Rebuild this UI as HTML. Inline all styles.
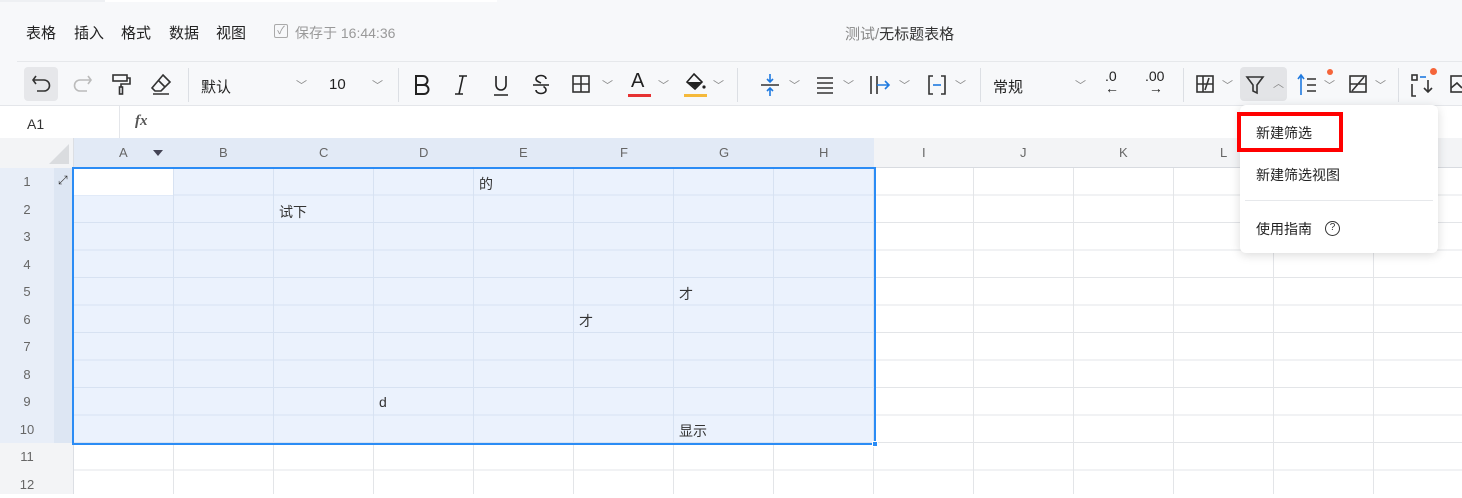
<!DOCTYPE html><html><head><meta charset="utf-8"><style>
*{margin:0;padding:0;box-sizing:border-box}
body{width:1462px;height:494px;overflow:hidden;background:#fff;font-family:"Liberation Sans","Noto Sans CJK SC",sans-serif;color:#333;position:relative}
.a{position:absolute}
.top{left:0;top:0;width:1462px;height:106px;background:#f7f8fa;border-bottom:1px solid #e4e6ea}
.menu{top:22px;font-size:15px;color:#222}
.tb{top:70px;font-size:15px;color:#222}
.sep{top:68px;width:1px;height:34px;background:#dcdfe4}
.chev{font-size:11px;color:#888}
.colh{top:138px;height:30px;background:#f3f4f6;border-bottom:1px solid #d8dbe0;font-size:13px;color:#666;text-align:center;line-height:30px}
.rowh{left:0;width:74px;height:27.5px;font-size:13px;color:#666;text-align:center;padding-right:20px;line-height:27px}
.cell{font-size:14px;color:#333}
</style></head><body>
<div class="a top"></div>
<div class="a" style="left:0;top:0;width:105px;height:2px;background:#eef0f3"></div>
<div class="a" style="left:105px;top:0;width:392px;height:2px;background:#fff"></div>
<div class="a" style="left:17px;top:61px;width:1445px;height:1px;background:#e6e8eb"></div>
<div class="a menu" style="left:26px">表格</div>
<div class="a menu" style="left:74px">插入</div>
<div class="a menu" style="left:121px">格式</div>
<div class="a menu" style="left:169px">数据</div>
<div class="a menu" style="left:216px">视图</div>
<div class="a" style="left:274px;top:24px;width:14px;height:14px;border:1px solid #aaa;border-radius:2px;font-size:11px;color:#999;line-height:12px;text-align:center">✓</div>
<div class="a" style="left:295px;top:23px;font-size:14px;color:#999">保存于 16:44:36</div>
<div class="a" style="left:845px;top:23px;font-size:15px;color:#333"><span style="color:#888">测试/</span>无标题表格</div>
<div class="a" style="left:24px;top:67px;width:34px;height:34px;background:#e6e7ea;border-radius:4px"></div>
<svg class="a" style="left:30px;top:72px" width="24" height="24" viewBox="0 0 24 24" fill="none" stroke="#333" stroke-width="1.6"><path d="M6 4 L3 8 L6 12 M3 8 H14 a5 5 0 0 1 0 11 H7"/></svg>
<svg class="a" style="left:70px;top:72px" width="24" height="24" viewBox="0 0 24 24" fill="none" stroke="#bbb" stroke-width="1.6"><path d="M18 4 L21 8 L18 12 M21 8 H10 a5 5 0 0 0 0 11 H17"/></svg>
<svg class="a" style="left:110px;top:72px" width="24" height="24" viewBox="0 0 24 24" fill="none" stroke="#333" stroke-width="1.6"><rect x="3" y="3" width="14" height="6"/><path d="M17 6 H20 V12 H11 V15"/><rect x="9.5" y="15" width="3" height="7"/></svg>
<svg class="a" style="left:149px;top:72px" width="24" height="24" viewBox="0 0 24 24" fill="none" stroke="#333" stroke-width="1.6"><path d="M14 3 L21 10 L12 19 L6 19 L3 16 Z M9 8 L16 15 M4 22 H20"/></svg>
<div class="a sep" style="left:188px"></div>
<div class="a tb" style="left:201px;top:76px">默认</div><div class="a chev" style="left:296px;top:77px">﹀</div>
<div class="a tb" style="left:329px;top:76px">10</div><div class="a chev" style="left:372px;top:77px">﹀</div>
<div class="a sep" style="left:398px"></div>
<svg class="a" style="left:413px;top:74px" width="18" height="22" viewBox="0 0 18 22" fill="none" stroke="#222" stroke-width="2"><path d="M3 2H10a4.5 4.5 0 0 1 0 9H3ZM3 11H11a4.5 4.5 0 0 1 0 9H3Z"/></svg>
<svg class="a" style="left:452px;top:74px" width="18" height="22" viewBox="0 0 18 22" fill="none" stroke="#222" stroke-width="1.6"><path d="M7 2H15M3 20H11M11 2L7 20"/></svg>
<svg class="a" style="left:491px;top:74px" width="20" height="22" viewBox="0 0 20 22" fill="none" stroke="#222" stroke-width="1.6"><path d="M5 2V11a5 5 0 0 0 10 0V2M3 21H17"/></svg>
<svg class="a" style="left:531px;top:74px" width="20" height="22" viewBox="0 0 20 22" fill="none" stroke="#222" stroke-width="1.6"><path d="M15 5a5 3.5 0 0 0-10 0c0 2 2.5 3 5 4M5 16a5 3.5 0 0 0 10 0c0-1.5-1-2.5-2.5-3.5M2 11H18"/></svg>
<svg class="a" style="left:571px;top:74px" width="20" height="20" viewBox="0 0 20 20" fill="none" stroke="#333" stroke-width="1.6"><rect x="2" y="2" width="16" height="16"/><path d="M10 2V18M2 10H18"/></svg><div class="a chev" style="left:602px;top:77px">﹀</div>
<div class="a" style="left:631px;top:70px;font-size:20px;color:#222">A</div><div class="a" style="left:628px;top:94px;width:23px;height:3px;background:#e63232"></div><div class="a chev" style="left:658px;top:77px">﹀</div>
<svg class="a" style="left:683px;top:72px" width="24" height="22" viewBox="0 0 24 22" fill="#222"><path d="M11 2 L19 10 L12 17 L4 10 Z" fill="none" stroke="#222" stroke-width="1.6"/><path d="M5 10 H18 L12 16 Z"/><circle cx="21" cy="15" r="1.6"/></svg><div class="a" style="left:684px;top:94px;width:23px;height:3px;background:#f5b93b"></div><div class="a chev" style="left:713px;top:77px">﹀</div>
<div class="a sep" style="left:737px"></div>
<svg class="a" style="left:759px;top:73px" width="22" height="24" viewBox="0 0 22 24" fill="none" stroke="#1f7ae0" stroke-width="1.6"><path d="M11 1V9M8 6L11 9L14 6M11 23V15M8 18L11 15L14 18"/><path d="M2 12H20" stroke="#333"/></svg><div class="a chev" style="left:789px;top:77px">﹀</div>
<svg class="a" style="left:815px;top:75px" width="20" height="20" viewBox="0 0 20 20" stroke="#333" stroke-width="1.6"><path d="M2 3H18M2 8H18M2 13H18M2 18H18"/></svg><div class="a chev" style="left:843px;top:77px">﹀</div>
<svg class="a" style="left:869px;top:74px" width="24" height="22" viewBox="0 0 24 22" fill="none" stroke="#333" stroke-width="1.6"><path d="M2 2V20M8 2V20"/><path d="M8 11H20M16 7L20 11L16 15" stroke="#1f7ae0"/></svg><div class="a chev" style="left:899px;top:77px">﹀</div>
<svg class="a" style="left:927px;top:74px" width="20" height="22" viewBox="0 0 20 22" fill="none" stroke="#333" stroke-width="1.6"><path d="M6 2H2V20H6M14 2H18V20H14"/><path d="M6 11H14" stroke="#1f7ae0"/></svg><div class="a chev" style="left:955px;top:77px">﹀</div>
<div class="a sep" style="left:980px"></div>
<div class="a tb" style="left:993px;top:76px">常规</div><div class="a chev" style="left:1075px;top:77px">﹀</div>
<div class="a" style="left:1105px;top:70px;font-size:14px;color:#222;line-height:12px">.0<br>←</div>
<div class="a" style="left:1145px;top:70px;font-size:14px;color:#222;line-height:12px">.00<br>&nbsp;→</div>
<div class="a sep" style="left:1183px"></div>
<svg class="a" style="left:1195px;top:74px" width="20" height="20" viewBox="0 0 20 20" fill="none" stroke="#333" stroke-width="1.6"><rect x="2" y="2" width="16" height="16"/><path d="M8 2V18M2 10H18M14 4L10 16"/></svg><div class="a chev" style="left:1222px;top:77px">﹀</div>
<div class="a" style="left:1240px;top:67px;width:47px;height:34px;background:#e3e4e7;border-radius:4px"></div>
<svg class="a" style="left:1245px;top:74px" width="20" height="22" viewBox="0 0 20 22" fill="none" stroke="#333" stroke-width="1.6"><path d="M2 3H18L12 11V19L8 17V11Z"/></svg><div class="a chev" style="left:1273px;top:75px">︿</div>
<svg class="a" style="left:1296px;top:73px" width="24" height="24" viewBox="0 0 24 24" fill="none" stroke="#333" stroke-width="1.6"><path d="M5 22V3M2 6L5 2L8 6" stroke="#1f7ae0"/><path d="M11 6H20M11 12H20M11 18H20"/></svg><div class="a" style="left:1327px;top:69px;width:6px;height:6px;border-radius:3px;background:#f5653a"></div><div class="a chev" style="left:1324px;top:77px">﹀</div>
<svg class="a" style="left:1348px;top:74px" width="20" height="20" viewBox="0 0 20 20" fill="none" stroke="#333" stroke-width="1.6"><rect x="2" y="2" width="16" height="16"/><path d="M2 10H18M16 3L4 17"/></svg><div class="a chev" style="left:1375px;top:77px">﹀</div>
<div class="a sep" style="left:1398px"></div>
<svg class="a" style="left:1410px;top:72px" width="24" height="26" viewBox="0 0 24 26" fill="none" stroke="#333" stroke-width="1.6"><rect x="2" y="3" width="5" height="5"/><path d="M2 12V24H6M18 8V20M14 16L18 20L22 16" /><path d="M10 5H16" stroke="#1f7ae0"/></svg><div class="a" style="left:1430px;top:68px;width:7px;height:7px;border-radius:4px;background:#f5653a"></div>
<svg class="a" style="left:1450px;top:74px" width="20" height="20" viewBox="0 0 20 20" fill="none" stroke="#333" stroke-width="1.6"><rect x="1" y="2" width="16" height="16"/><path d="M1 14L7 9L12 14"/></svg>

<div class="a" style="left:0;top:106px;width:1462px;height:32px;background:#fff"></div>
<div class="a" style="left:119px;top:106px;width:1px;height:32px;background:#e4e6ea"></div>
<div class="a" style="left:27px;top:116px;font-size:14px;color:#333">A1</div>
<div class="a" style="left:135px;top:113px;font-size:15px;font-style:italic;font-weight:bold;color:#555;font-family:'Liberation Serif',serif">fx</div>

<div class="a" style="left:74px;top:168px;width:1388px;height:326px;background-image:repeating-linear-gradient(90deg,transparent 0 99px,#e3e5e8 99px 100px),repeating-linear-gradient(180deg,transparent 0 26.5px,#e3e5e8 26.5px 27.5px)"></div>
<div class="a" style="left:74px;top:168px;width:800px;height:275px;background:#ebf2fd;background-image:repeating-linear-gradient(90deg,transparent 0 99px,#d7e2f2 99px 100px),repeating-linear-gradient(180deg,transparent 0 26.5px,#d7e2f2 26.5px 27.5px)"></div>
<div class="a" style="left:74px;top:168px;width:99px;height:27px;background:#fff"></div>
<div class="a colh" style="left:0;width:1462px"></div>
<div class="a" style="left:74px;top:138px;width:800px;height:30px;background:#e2eaf6;border-bottom:1px solid #d2dcec"></div>
<div class="a" style="left:0;top:138px;width:74px;height:30px;background:#f3f4f6;border-right:1px solid #dcdfe4"></div>
<div class="a" style="left:49px;top:144px;width:0;height:0;border-left:20px solid transparent;border-bottom:20px solid #dadcdf"></div>
<div class="a" style="left:0;top:168px;width:74px;height:326px;background:#f3f4f6;border-right:1px solid #dcdfe4"></div>
<div class="a" style="left:0;top:168px;width:74px;height:275px;background:#e8eef8"></div>
<div class="a" style="left:54px;top:168px;width:19px;height:275px;background:#dde6f3"></div>
<div class="a" style="left:58px;top:173px;font-size:12px;color:#333">⤢</div>
<div class="a" style="left:153px;top:150px;width:0;height:0;border-left:5px solid transparent;border-right:5px solid transparent;border-top:6px solid #445"></div>
<div class="a" style="left:72px;top:167px;width:804px;height:278px;border:2px solid #2b8cf5"></div>
<div class="a" style="left:872px;top:441px;width:6px;height:6px;background:#2b8cf5;border:1px solid #fff"></div>

<div class="a cell" style="left:479px;top:174px">的</div>
<div class="a cell" style="left:279px;top:202px">试下</div>
<div class="a cell" style="left:679px;top:284px">才</div>
<div class="a cell" style="left:579px;top:311px">才</div>
<div class="a cell" style="left:379px;top:394px">d</div>
<div class="a cell" style="left:679px;top:421px">显示</div>

<div class="a" style="left:1240px;top:105px;width:198px;height:148px;background:#fff;border-radius:6px;box-shadow:0 2px 10px rgba(0,0,0,.15)"></div>
<div class="a" style="left:1237px;top:112px;width:106px;height:40px;border:4px solid #f00"></div>
<div class="a" style="left:1256px;top:123px;font-size:14px;color:#222">新建筛选</div>
<div class="a" style="left:1256px;top:165px;font-size:14px;color:#222">新建筛选视图</div>
<div class="a" style="left:1245px;top:200px;width:188px;height:1px;background:#e6e8eb"></div>
<div class="a" style="left:1256px;top:219px;font-size:14px;color:#222">使用指南</div>
<div class="a" style="left:1325px;top:221px;width:15px;height:15px;border:1.3px solid #333;border-radius:50%;font-size:10px;text-align:center;line-height:12px">?</div>

<div class="a" style="left:0;top:138px;width:1462px;height:30px;font-size:13px;color:#666;line-height:30px">
<span class="a" style="left:119px">A</span><span class="a" style="left:219px">B</span><span class="a" style="left:319px">C</span><span class="a" style="left:419px">D</span><span class="a" style="left:519px">E</span><span class="a" style="left:620px">F</span><span class="a" style="left:719px">G</span><span class="a" style="left:819px">H</span><span class="a" style="left:922px">I</span><span class="a" style="left:1020px">J</span><span class="a" style="left:1119px">K</span><span class="a" style="left:1220px">L</span>
</div>
<div class="a" style="left:0;top:168px;width:74px">
<div class="rowh">1</div><div class="rowh">2</div><div class="rowh">3</div><div class="rowh">4</div><div class="rowh">5</div><div class="rowh">6</div><div class="rowh">7</div><div class="rowh">8</div><div class="rowh">9</div><div class="rowh">10</div><div class="rowh">11</div><div class="rowh">12</div>
</div>
</body></html>
